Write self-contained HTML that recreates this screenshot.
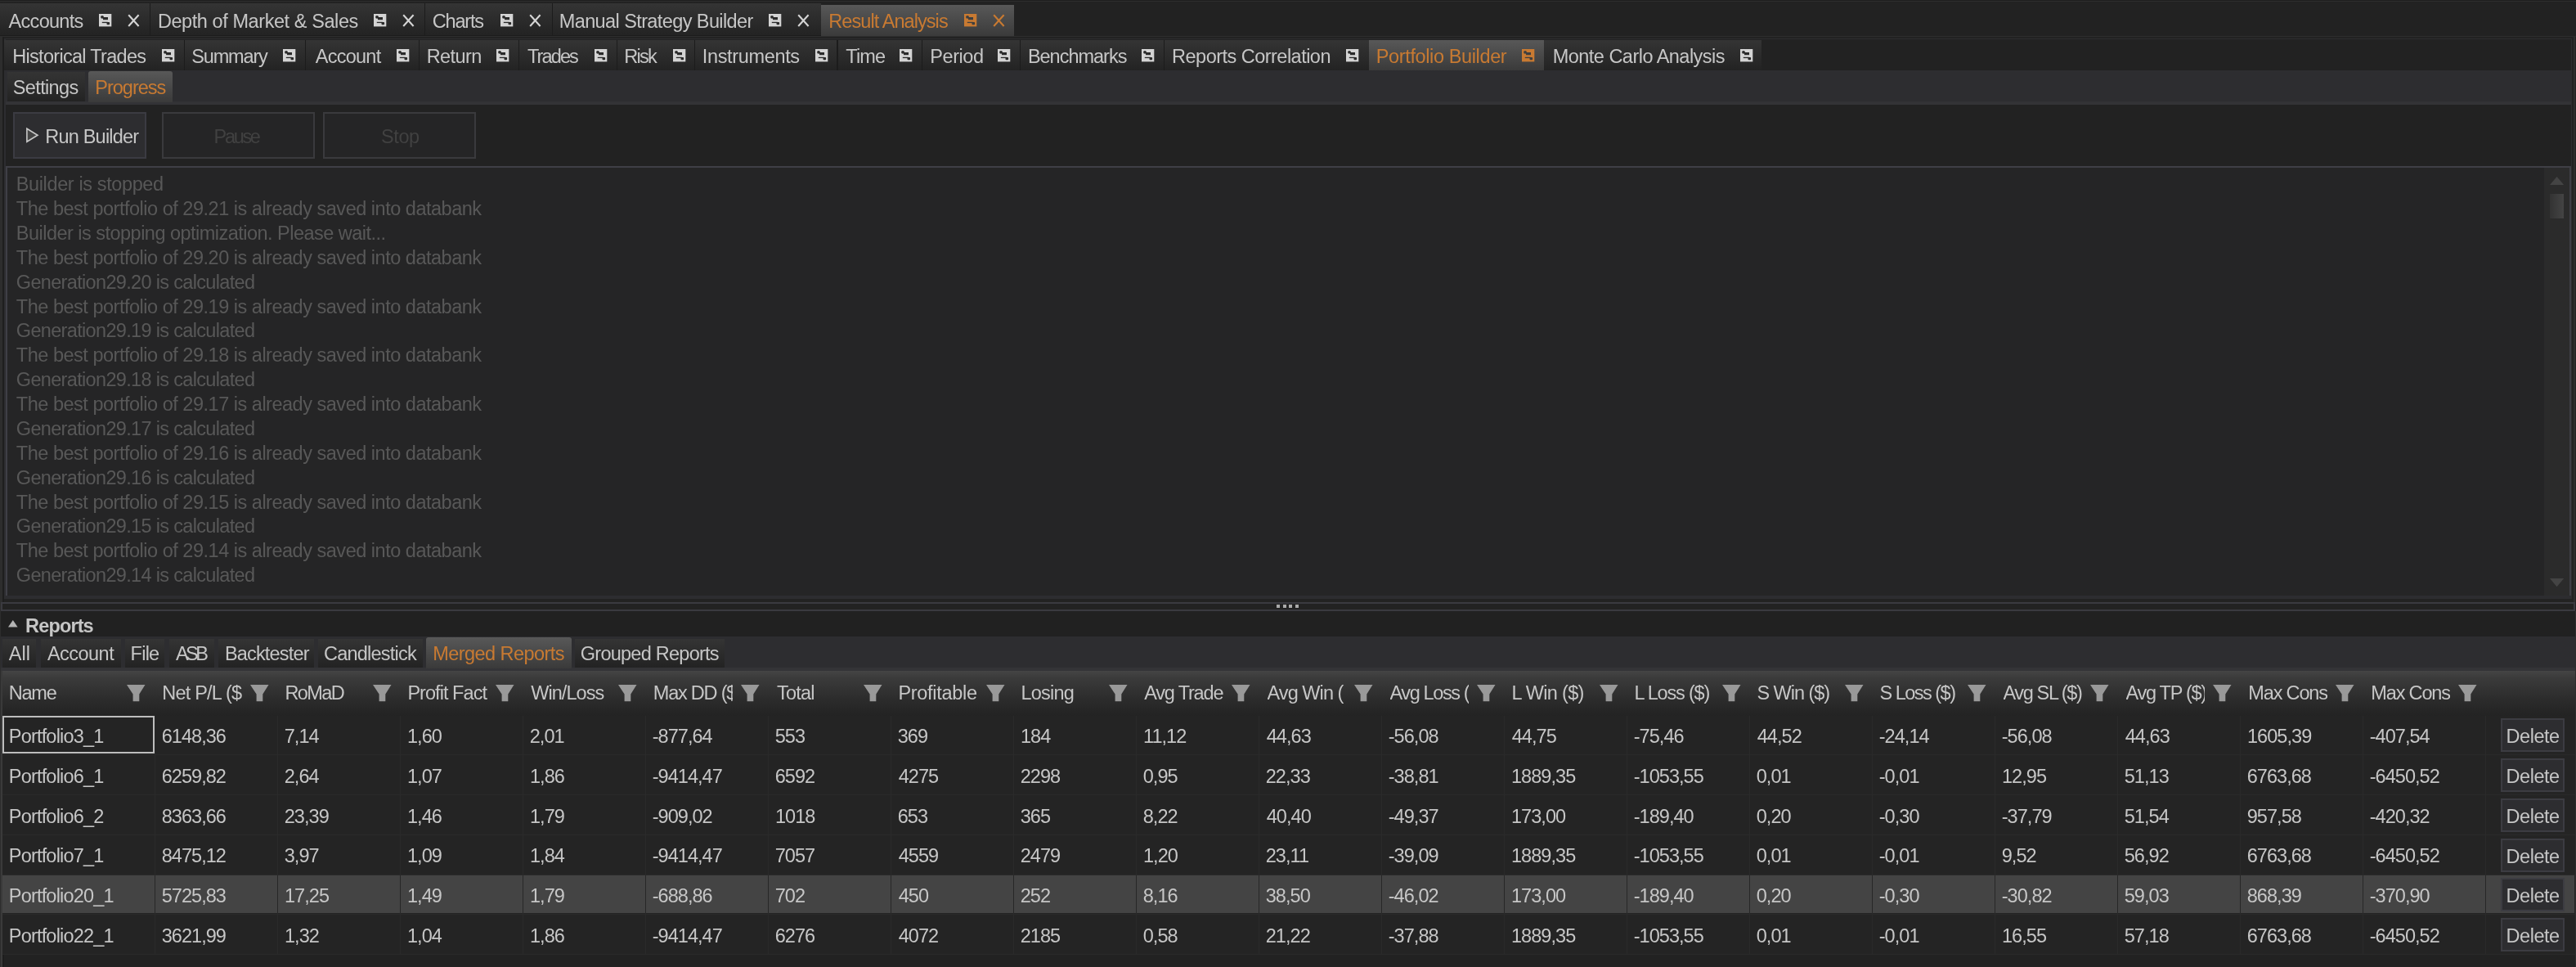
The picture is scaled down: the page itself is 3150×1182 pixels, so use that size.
<!DOCTYPE html>
<html><head><meta charset="utf-8"><title>Result Analysis - Portfolio Builder</title>
<style>
html,body{margin:0;padding:0;}
body{width:3150px;height:1182px;background:#222222;position:relative;overflow:hidden;font-family:"Liberation Sans", sans-serif;}
#app{position:absolute;left:0;top:0;width:3150px;height:1182px;overflow:hidden;will-change:transform;}
#app div,#app span,#app svg{position:absolute;}
#app span{white-space:pre;display:block;}
</style></head><body><div id="app">
<div style="left:0px;top:0px;width:3150px;height:1px;background:#1e1e1e;"></div>
<div style="left:0px;top:1px;width:3150px;height:1px;background:#2d2d2d;"></div>
<div style="left:0px;top:4px;width:1004px;height:40px;background:#1c1c1c;"></div>
<div style="left:0px;top:4px;width:183px;height:39px;background:linear-gradient(#343434,#232323);"></div>
<div style="left:184px;top:4px;width:335px;height:39px;background:linear-gradient(#343434,#232323);"></div>
<div style="left:520px;top:4px;width:154.5px;height:39px;background:linear-gradient(#343434,#232323);"></div>
<div style="left:675.5px;top:4px;width:328.5px;height:39px;background:linear-gradient(#343434,#232323);"></div>
<div style="left:1004.4px;top:6px;width:236.1px;height:39px;background:linear-gradient(#585858,#3a3a3a);"></div>
<svg style="left:121px;top:17px" width="16" height="16" viewBox="0 0 16 16"><rect x="0" y="0" width="15.3" height="15.4" fill="#d4d4d4"/><circle cx="4" cy="3.8" r="1.9" fill="#2a2a2a"/><rect x="5" y="4" width="6" height="3.2" fill="#2a2a2a"/><rect x="3.8" y="9.8" width="7" height="1.3" fill="#2a2a2a"/><rect x="9.5" y="10" width="3.6" height="3.3" rx="1" fill="#2a2a2a"/></svg>
<svg style="left:155.9px;top:17px" width="16" height="17" viewBox="0 0 16 17"><path d="M1.2 1.2 L13.6 15 M13.6 1.2 L1.2 15" stroke="#d4d4d4" stroke-width="2.1" fill="none"/></svg>
<svg style="left:456.7px;top:17px" width="16" height="16" viewBox="0 0 16 16"><rect x="0" y="0" width="15.3" height="15.4" fill="#d4d4d4"/><circle cx="4" cy="3.8" r="1.9" fill="#2a2a2a"/><rect x="5" y="4" width="6" height="3.2" fill="#2a2a2a"/><rect x="3.8" y="9.8" width="7" height="1.3" fill="#2a2a2a"/><rect x="9.5" y="10" width="3.6" height="3.3" rx="1" fill="#2a2a2a"/></svg>
<svg style="left:491.5px;top:17px" width="16" height="17" viewBox="0 0 16 17"><path d="M1.2 1.2 L13.6 15 M13.6 1.2 L1.2 15" stroke="#d4d4d4" stroke-width="2.1" fill="none"/></svg>
<svg style="left:612.3px;top:17px" width="16" height="16" viewBox="0 0 16 16"><rect x="0" y="0" width="15.3" height="15.4" fill="#d4d4d4"/><circle cx="4" cy="3.8" r="1.9" fill="#2a2a2a"/><rect x="5" y="4" width="6" height="3.2" fill="#2a2a2a"/><rect x="3.8" y="9.8" width="7" height="1.3" fill="#2a2a2a"/><rect x="9.5" y="10" width="3.6" height="3.3" rx="1" fill="#2a2a2a"/></svg>
<svg style="left:647.0px;top:17px" width="16" height="17" viewBox="0 0 16 17"><path d="M1.2 1.2 L13.6 15 M13.6 1.2 L1.2 15" stroke="#d4d4d4" stroke-width="2.1" fill="none"/></svg>
<svg style="left:940px;top:17px" width="16" height="16" viewBox="0 0 16 16"><rect x="0" y="0" width="15.3" height="15.4" fill="#d4d4d4"/><circle cx="4" cy="3.8" r="1.9" fill="#2a2a2a"/><rect x="5" y="4" width="6" height="3.2" fill="#2a2a2a"/><rect x="3.8" y="9.8" width="7" height="1.3" fill="#2a2a2a"/><rect x="9.5" y="10" width="3.6" height="3.3" rx="1" fill="#2a2a2a"/></svg>
<svg style="left:975.1px;top:17px" width="16" height="17" viewBox="0 0 16 17"><path d="M1.2 1.2 L13.6 15 M13.6 1.2 L1.2 15" stroke="#d4d4d4" stroke-width="2.1" fill="none"/></svg>
<svg style="left:1178.7px;top:17px" width="16" height="16" viewBox="0 0 16 16"><rect x="0" y="0" width="15.3" height="15.4" fill="#c87a32"/><circle cx="4" cy="3.8" r="1.9" fill="#3f3f3f"/><rect x="5" y="4" width="6" height="3.2" fill="#3f3f3f"/><rect x="3.8" y="9.8" width="7" height="1.3" fill="#3f3f3f"/><rect x="9.5" y="10" width="3.6" height="3.3" rx="1" fill="#3f3f3f"/></svg>
<svg style="left:1213.5px;top:17px" width="16" height="17" viewBox="0 0 16 17"><path d="M1.2 1.2 L13.6 15 M13.6 1.2 L1.2 15" stroke="#c87a32" stroke-width="2.1" fill="none"/></svg>
<div style="left:0px;top:44px;width:3150px;height:1px;background:#2d2d2d;"></div>
<div style="left:0px;top:44px;width:2.5px;height:1138px;background:#2d2d2d;"></div>
<div style="left:3147px;top:44px;width:2px;height:703px;background:#2d2d2d;"></div>
<div style="left:3148.7px;top:747px;width:1.3px;height:435px;background:#2d2d2d;"></div>
<div style="left:2.5px;top:45px;width:2.5px;height:1137px;background:#1e1e1e;"></div>
<div style="left:5px;top:47px;width:3140px;height:1px;background:#2d2d30;"></div>
<div style="left:3144px;top:47px;width:1px;height:684px;background:#2d2d30;"></div>
<div style="left:5px;top:47px;width:1.5px;height:684px;background:#2d2d30;"></div>
<div style="left:5px;top:48.5px;width:2149px;height:37.5px;background:#1c1c1c;"></div>
<div style="left:5px;top:49px;width:220px;height:37px;background:linear-gradient(#343434,#232323);"></div>
<div style="left:226px;top:49px;width:146.8px;height:37px;background:linear-gradient(#343434,#232323);"></div>
<div style="left:373.8px;top:49px;width:138.2px;height:37px;background:linear-gradient(#343434,#232323);"></div>
<div style="left:513px;top:49px;width:120.5px;height:37px;background:linear-gradient(#343434,#232323);"></div>
<div style="left:634.5px;top:49px;width:119.5px;height:37px;background:linear-gradient(#343434,#232323);"></div>
<div style="left:755px;top:49px;width:94.39999999999998px;height:37px;background:linear-gradient(#343434,#232323);"></div>
<div style="left:850.4px;top:49px;width:173.10000000000002px;height:37px;background:linear-gradient(#343434,#232323);"></div>
<div style="left:1024.5px;top:49px;width:102.5px;height:37px;background:linear-gradient(#343434,#232323);"></div>
<div style="left:1128px;top:49px;width:118.79999999999995px;height:37px;background:linear-gradient(#343434,#232323);"></div>
<div style="left:1247.8px;top:49px;width:175.20000000000005px;height:37px;background:linear-gradient(#343434,#232323);"></div>
<div style="left:1424px;top:49px;width:249.5999999999999px;height:37px;background:linear-gradient(#343434,#232323);"></div>
<div style="left:1887.6px;top:49px;width:266.4000000000001px;height:37px;background:linear-gradient(#343434,#232323);"></div>
<div style="left:1673.6px;top:48.5px;width:214px;height:37.5px;background:linear-gradient(#585858,#3a3a3a);"></div>
<svg style="left:197.7px;top:59.9px" width="16" height="16" viewBox="0 0 16 16"><rect x="0" y="0" width="15.3" height="15.4" fill="#d4d4d4"/><circle cx="4" cy="3.8" r="1.9" fill="#2a2a2a"/><rect x="5" y="4" width="6" height="3.2" fill="#2a2a2a"/><rect x="3.8" y="9.8" width="7" height="1.3" fill="#2a2a2a"/><rect x="9.5" y="10" width="3.6" height="3.3" rx="1" fill="#2a2a2a"/></svg>
<svg style="left:346px;top:59.9px" width="16" height="16" viewBox="0 0 16 16"><rect x="0" y="0" width="15.3" height="15.4" fill="#d4d4d4"/><circle cx="4" cy="3.8" r="1.9" fill="#2a2a2a"/><rect x="5" y="4" width="6" height="3.2" fill="#2a2a2a"/><rect x="3.8" y="9.8" width="7" height="1.3" fill="#2a2a2a"/><rect x="9.5" y="10" width="3.6" height="3.3" rx="1" fill="#2a2a2a"/></svg>
<svg style="left:484.7px;top:59.9px" width="16" height="16" viewBox="0 0 16 16"><rect x="0" y="0" width="15.3" height="15.4" fill="#d4d4d4"/><circle cx="4" cy="3.8" r="1.9" fill="#2a2a2a"/><rect x="5" y="4" width="6" height="3.2" fill="#2a2a2a"/><rect x="3.8" y="9.8" width="7" height="1.3" fill="#2a2a2a"/><rect x="9.5" y="10" width="3.6" height="3.3" rx="1" fill="#2a2a2a"/></svg>
<svg style="left:607px;top:59.9px" width="16" height="16" viewBox="0 0 16 16"><rect x="0" y="0" width="15.3" height="15.4" fill="#d4d4d4"/><circle cx="4" cy="3.8" r="1.9" fill="#2a2a2a"/><rect x="5" y="4" width="6" height="3.2" fill="#2a2a2a"/><rect x="3.8" y="9.8" width="7" height="1.3" fill="#2a2a2a"/><rect x="9.5" y="10" width="3.6" height="3.3" rx="1" fill="#2a2a2a"/></svg>
<svg style="left:726.8px;top:59.9px" width="16" height="16" viewBox="0 0 16 16"><rect x="0" y="0" width="15.3" height="15.4" fill="#d4d4d4"/><circle cx="4" cy="3.8" r="1.9" fill="#2a2a2a"/><rect x="5" y="4" width="6" height="3.2" fill="#2a2a2a"/><rect x="3.8" y="9.8" width="7" height="1.3" fill="#2a2a2a"/><rect x="9.5" y="10" width="3.6" height="3.3" rx="1" fill="#2a2a2a"/></svg>
<svg style="left:822.5px;top:59.9px" width="16" height="16" viewBox="0 0 16 16"><rect x="0" y="0" width="15.3" height="15.4" fill="#d4d4d4"/><circle cx="4" cy="3.8" r="1.9" fill="#2a2a2a"/><rect x="5" y="4" width="6" height="3.2" fill="#2a2a2a"/><rect x="3.8" y="9.8" width="7" height="1.3" fill="#2a2a2a"/><rect x="9.5" y="10" width="3.6" height="3.3" rx="1" fill="#2a2a2a"/></svg>
<svg style="left:997px;top:59.9px" width="16" height="16" viewBox="0 0 16 16"><rect x="0" y="0" width="15.3" height="15.4" fill="#d4d4d4"/><circle cx="4" cy="3.8" r="1.9" fill="#2a2a2a"/><rect x="5" y="4" width="6" height="3.2" fill="#2a2a2a"/><rect x="3.8" y="9.8" width="7" height="1.3" fill="#2a2a2a"/><rect x="9.5" y="10" width="3.6" height="3.3" rx="1" fill="#2a2a2a"/></svg>
<svg style="left:1100px;top:59.9px" width="16" height="16" viewBox="0 0 16 16"><rect x="0" y="0" width="15.3" height="15.4" fill="#d4d4d4"/><circle cx="4" cy="3.8" r="1.9" fill="#2a2a2a"/><rect x="5" y="4" width="6" height="3.2" fill="#2a2a2a"/><rect x="3.8" y="9.8" width="7" height="1.3" fill="#2a2a2a"/><rect x="9.5" y="10" width="3.6" height="3.3" rx="1" fill="#2a2a2a"/></svg>
<svg style="left:1219.6px;top:59.9px" width="16" height="16" viewBox="0 0 16 16"><rect x="0" y="0" width="15.3" height="15.4" fill="#d4d4d4"/><circle cx="4" cy="3.8" r="1.9" fill="#2a2a2a"/><rect x="5" y="4" width="6" height="3.2" fill="#2a2a2a"/><rect x="3.8" y="9.8" width="7" height="1.3" fill="#2a2a2a"/><rect x="9.5" y="10" width="3.6" height="3.3" rx="1" fill="#2a2a2a"/></svg>
<svg style="left:1396.3px;top:59.9px" width="16" height="16" viewBox="0 0 16 16"><rect x="0" y="0" width="15.3" height="15.4" fill="#d4d4d4"/><circle cx="4" cy="3.8" r="1.9" fill="#2a2a2a"/><rect x="5" y="4" width="6" height="3.2" fill="#2a2a2a"/><rect x="3.8" y="9.8" width="7" height="1.3" fill="#2a2a2a"/><rect x="9.5" y="10" width="3.6" height="3.3" rx="1" fill="#2a2a2a"/></svg>
<svg style="left:1645.8px;top:59.9px" width="16" height="16" viewBox="0 0 16 16"><rect x="0" y="0" width="15.3" height="15.4" fill="#d4d4d4"/><circle cx="4" cy="3.8" r="1.9" fill="#2a2a2a"/><rect x="5" y="4" width="6" height="3.2" fill="#2a2a2a"/><rect x="3.8" y="9.8" width="7" height="1.3" fill="#2a2a2a"/><rect x="9.5" y="10" width="3.6" height="3.3" rx="1" fill="#2a2a2a"/></svg>
<svg style="left:2127.6px;top:59.9px" width="16" height="16" viewBox="0 0 16 16"><rect x="0" y="0" width="15.3" height="15.4" fill="#d4d4d4"/><circle cx="4" cy="3.8" r="1.9" fill="#2a2a2a"/><rect x="5" y="4" width="6" height="3.2" fill="#2a2a2a"/><rect x="3.8" y="9.8" width="7" height="1.3" fill="#2a2a2a"/><rect x="9.5" y="10" width="3.6" height="3.3" rx="1" fill="#2a2a2a"/></svg>
<svg style="left:1861.4px;top:59.9px" width="16" height="16" viewBox="0 0 16 16"><rect x="0" y="0" width="15.3" height="15.4" fill="#c87a32"/><circle cx="4" cy="3.8" r="1.9" fill="#3f3f3f"/><rect x="5" y="4" width="6" height="3.2" fill="#3f3f3f"/><rect x="3.8" y="9.8" width="7" height="1.3" fill="#3f3f3f"/><rect x="9.5" y="10" width="3.6" height="3.3" rx="1" fill="#3f3f3f"/></svg>
<div style="left:6.5px;top:86px;width:3137.5px;height:42px;background:#2d2d30;"></div>
<div style="left:6.5px;top:124px;width:3137.5px;height:4px;background:#333336;"></div>
<div style="left:9px;top:88px;width:95px;height:36px;background:linear-gradient(#343434,#232323);"></div>
<div style="left:108px;top:87px;width:103px;height:38px;background:linear-gradient(#585858,#3a3a3a);border-radius:3px 3px 0 0;"></div>
<div style="left:16.1px;top:137.2px;width:163px;height:56.5px;background:#2d2d30;box-sizing:border-box;border:2px solid #3b3b42;"></div>
<div style="left:198px;top:137.2px;width:187px;height:56.5px;background:#252526;box-sizing:border-box;border:2px solid #3a3a3d;"></div>
<div style="left:395px;top:137.2px;width:187px;height:56.5px;background:#252526;box-sizing:border-box;border:2px solid #3a3a3d;"></div>
<svg style="left:31px;top:154px" width="20" height="23" viewBox="0 0 20 23"><path d="M1.9 3.3 L15 11.3 L1.9 19.3 Z" fill="#444" stroke="#c8c8c8" stroke-width="1.6" stroke-linejoin="miter"/></svg>
<div style="left:6.5px;top:203px;width:3137.5px;height:527px;background:#252526;box-sizing:border-box;border:2px solid #3f3f46;"></div>
<div style="left:5px;top:728px;width:3140px;height:4px;background:#2d2d30;"></div>
<div style="left:3110.5px;top:205px;width:31.5px;height:523px;background:#2b2b2b;"></div>
<svg style="left:3117.7px;top:215.8px" width="18" height="10" viewBox="0 0 18 10"><path d="M0 10 L8.6 0 L17.2 10 Z" fill="#444"/></svg>
<svg style="left:3117.7px;top:707px" width="18" height="11" viewBox="0 0 18 11"><path d="M0 0 L17.2 0 L8.6 10.3 Z" fill="#444"/></svg>
<div style="left:3117.7px;top:236.5px;width:17.2px;height:30.2px;background:linear-gradient(90deg,#333,#444);"></div>
<div style="left:1.2px;top:735.6px;width:3147.6px;height:11.5px;background:#222;box-sizing:border-box;border:2px solid #3a3a40;"></div>
<div style="left:1561px;top:739.3px;width:4.2px;height:4.2px;background:#aaaaaa;"></div>
<div style="left:1568.5px;top:739.3px;width:4.2px;height:4.2px;background:#aaaaaa;"></div>
<div style="left:1576px;top:739.3px;width:4.2px;height:4.2px;background:#aaaaaa;"></div>
<div style="left:1583.5px;top:739.3px;width:4.2px;height:4.2px;background:#aaaaaa;"></div>
<div style="left:0px;top:747px;width:1.2px;height:435px;background:#2d2d2d;"></div>
<div style="left:1.2px;top:820px;width:1.5px;height:362px;background:#3a3a3a;"></div>
<div style="left:1.2px;top:747px;width:3147.5px;height:31px;background:#212121;"></div>
<svg style="left:10.3px;top:757.7px" width="12" height="9" viewBox="0 0 12 9"><path d="M0 8.4 L5.8 0 L11.6 8.4 Z" fill="#b4b4b4"/></svg>
<div style="left:1.2px;top:778px;width:3147.5px;height:42px;background:#2d2d30;"></div>
<div style="left:1.2px;top:816px;width:3147.5px;height:4px;background:#343437;"></div>
<div style="left:3px;top:780.5px;width:41px;height:35.5px;background:linear-gradient(#343434,#232323);"></div>
<div style="left:49.6px;top:780.5px;width:98.0px;height:35.5px;background:linear-gradient(#343434,#232323);"></div>
<div style="left:152.6px;top:780.5px;width:48.900000000000006px;height:35.5px;background:linear-gradient(#343434,#232323);"></div>
<div style="left:207px;top:780.5px;width:54.80000000000001px;height:35.5px;background:linear-gradient(#343434,#232323);"></div>
<div style="left:267px;top:780.5px;width:117px;height:35.5px;background:linear-gradient(#343434,#232323);"></div>
<div style="left:389px;top:780.5px;width:127.60000000000002px;height:35.5px;background:linear-gradient(#343434,#232323);"></div>
<div style="left:702.7px;top:780.5px;width:183.0px;height:35.5px;background:linear-gradient(#343434,#232323);"></div>
<div style="left:520.7px;top:779px;width:178.3px;height:38px;background:linear-gradient(#585858,#3a3a3a);border-radius:3px 3px 0 0;"></div>
<div style="left:2.7px;top:820px;width:3146px;height:54.5px;background:linear-gradient(#454545 0%,#3b3b3b 15%,#2c2c2c 62%,#232323 100%);"></div>
<svg style="left:154.7px;top:836.6px" width="24" height="22" viewBox="0 0 24 22"><path d="M0 0 H22.5 L15.3 11.4 V20.3 H7.6 V11.4 Z" fill="#999999"/></svg>
<svg style="left:305.5px;top:836.6px" width="24" height="22" viewBox="0 0 24 22"><path d="M0 0 H22.5 L15.3 11.4 V20.3 H7.6 V11.4 Z" fill="#999999"/></svg>
<svg style="left:455.5px;top:836.6px" width="24" height="22" viewBox="0 0 24 22"><path d="M0 0 H22.5 L15.3 11.4 V20.3 H7.6 V11.4 Z" fill="#999999"/></svg>
<svg style="left:605.5px;top:836.6px" width="24" height="22" viewBox="0 0 24 22"><path d="M0 0 H22.5 L15.3 11.4 V20.3 H7.6 V11.4 Z" fill="#999999"/></svg>
<svg style="left:755.5px;top:836.6px" width="24" height="22" viewBox="0 0 24 22"><path d="M0 0 H22.5 L15.3 11.4 V20.3 H7.6 V11.4 Z" fill="#999999"/></svg>
<svg style="left:905.5px;top:836.6px" width="24" height="22" viewBox="0 0 24 22"><path d="M0 0 H22.5 L15.3 11.4 V20.3 H7.6 V11.4 Z" fill="#999999"/></svg>
<svg style="left:1055.5px;top:836.6px" width="24" height="22" viewBox="0 0 24 22"><path d="M0 0 H22.5 L15.3 11.4 V20.3 H7.6 V11.4 Z" fill="#999999"/></svg>
<svg style="left:1205.5px;top:836.6px" width="24" height="22" viewBox="0 0 24 22"><path d="M0 0 H22.5 L15.3 11.4 V20.3 H7.6 V11.4 Z" fill="#999999"/></svg>
<svg style="left:1355.5px;top:836.6px" width="24" height="22" viewBox="0 0 24 22"><path d="M0 0 H22.5 L15.3 11.4 V20.3 H7.6 V11.4 Z" fill="#999999"/></svg>
<svg style="left:1505.5px;top:836.6px" width="24" height="22" viewBox="0 0 24 22"><path d="M0 0 H22.5 L15.3 11.4 V20.3 H7.6 V11.4 Z" fill="#999999"/></svg>
<svg style="left:1655.5px;top:836.6px" width="24" height="22" viewBox="0 0 24 22"><path d="M0 0 H22.5 L15.3 11.4 V20.3 H7.6 V11.4 Z" fill="#999999"/></svg>
<svg style="left:1805.5px;top:836.6px" width="24" height="22" viewBox="0 0 24 22"><path d="M0 0 H22.5 L15.3 11.4 V20.3 H7.6 V11.4 Z" fill="#999999"/></svg>
<svg style="left:1955.5px;top:836.6px" width="24" height="22" viewBox="0 0 24 22"><path d="M0 0 H22.5 L15.3 11.4 V20.3 H7.6 V11.4 Z" fill="#999999"/></svg>
<svg style="left:2105.5px;top:836.6px" width="24" height="22" viewBox="0 0 24 22"><path d="M0 0 H22.5 L15.3 11.4 V20.3 H7.6 V11.4 Z" fill="#999999"/></svg>
<svg style="left:2255.5px;top:836.6px" width="24" height="22" viewBox="0 0 24 22"><path d="M0 0 H22.5 L15.3 11.4 V20.3 H7.6 V11.4 Z" fill="#999999"/></svg>
<svg style="left:2405.5px;top:836.6px" width="24" height="22" viewBox="0 0 24 22"><path d="M0 0 H22.5 L15.3 11.4 V20.3 H7.6 V11.4 Z" fill="#999999"/></svg>
<svg style="left:2555.5px;top:836.6px" width="24" height="22" viewBox="0 0 24 22"><path d="M0 0 H22.5 L15.3 11.4 V20.3 H7.6 V11.4 Z" fill="#999999"/></svg>
<svg style="left:2705.5px;top:836.6px" width="24" height="22" viewBox="0 0 24 22"><path d="M0 0 H22.5 L15.3 11.4 V20.3 H7.6 V11.4 Z" fill="#999999"/></svg>
<svg style="left:2855.5px;top:836.6px" width="24" height="22" viewBox="0 0 24 22"><path d="M0 0 H22.5 L15.3 11.4 V20.3 H7.6 V11.4 Z" fill="#999999"/></svg>
<svg style="left:3005.5px;top:836.6px" width="24" height="22" viewBox="0 0 24 22"><path d="M0 0 H22.5 L15.3 11.4 V20.3 H7.6 V11.4 Z" fill="#999999"/></svg>
<div style="left:2.7px;top:874.5px;width:3146px;height:292px;background:#242424;"></div>
<div style="left:2.7px;top:922px;width:3146px;height:1px;background:#2a2a2a;"></div>
<div style="left:2.7px;top:971px;width:3146px;height:1px;background:#2a2a2a;"></div>
<div style="left:2.7px;top:1020px;width:3146px;height:1px;background:#2a2a2a;"></div>
<div style="left:2.7px;top:1069px;width:3146px;height:1px;background:#2a2a2a;"></div>
<div style="left:2.7px;top:1069.5px;width:3145.3px;height:46.7px;background:#444444;"></div>
<div style="left:2.7px;top:1117px;width:3146px;height:1px;background:#2a2a2a;"></div>
<div style="left:2.7px;top:1166px;width:3146px;height:1px;background:#2a2a2a;"></div>
<div style="left:188.5px;top:874.5px;width:1px;height:292px;background:#2a2a2a;"></div>
<div style="left:188.5px;top:1069.5px;width:1.5px;height:46.7px;background:#272727;"></div>
<div style="left:338.5px;top:874.5px;width:1px;height:292px;background:#2a2a2a;"></div>
<div style="left:338.5px;top:1069.5px;width:1.5px;height:46.7px;background:#272727;"></div>
<div style="left:488.5px;top:874.5px;width:1px;height:292px;background:#2a2a2a;"></div>
<div style="left:488.5px;top:1069.5px;width:1.5px;height:46.7px;background:#272727;"></div>
<div style="left:638.5px;top:874.5px;width:1px;height:292px;background:#2a2a2a;"></div>
<div style="left:638.5px;top:1069.5px;width:1.5px;height:46.7px;background:#272727;"></div>
<div style="left:788.5px;top:874.5px;width:1px;height:292px;background:#2a2a2a;"></div>
<div style="left:788.5px;top:1069.5px;width:1.5px;height:46.7px;background:#272727;"></div>
<div style="left:938.5px;top:874.5px;width:1px;height:292px;background:#2a2a2a;"></div>
<div style="left:938.5px;top:1069.5px;width:1.5px;height:46.7px;background:#272727;"></div>
<div style="left:1088.5px;top:874.5px;width:1px;height:292px;background:#2a2a2a;"></div>
<div style="left:1088.5px;top:1069.5px;width:1.5px;height:46.7px;background:#272727;"></div>
<div style="left:1238.5px;top:874.5px;width:1px;height:292px;background:#2a2a2a;"></div>
<div style="left:1238.5px;top:1069.5px;width:1.5px;height:46.7px;background:#272727;"></div>
<div style="left:1388.5px;top:874.5px;width:1px;height:292px;background:#2a2a2a;"></div>
<div style="left:1388.5px;top:1069.5px;width:1.5px;height:46.7px;background:#272727;"></div>
<div style="left:1538.5px;top:874.5px;width:1px;height:292px;background:#2a2a2a;"></div>
<div style="left:1538.5px;top:1069.5px;width:1.5px;height:46.7px;background:#272727;"></div>
<div style="left:1688.5px;top:874.5px;width:1px;height:292px;background:#2a2a2a;"></div>
<div style="left:1688.5px;top:1069.5px;width:1.5px;height:46.7px;background:#272727;"></div>
<div style="left:1838.5px;top:874.5px;width:1px;height:292px;background:#2a2a2a;"></div>
<div style="left:1838.5px;top:1069.5px;width:1.5px;height:46.7px;background:#272727;"></div>
<div style="left:1988.5px;top:874.5px;width:1px;height:292px;background:#2a2a2a;"></div>
<div style="left:1988.5px;top:1069.5px;width:1.5px;height:46.7px;background:#272727;"></div>
<div style="left:2138.5px;top:874.5px;width:1px;height:292px;background:#2a2a2a;"></div>
<div style="left:2138.5px;top:1069.5px;width:1.5px;height:46.7px;background:#272727;"></div>
<div style="left:2288.5px;top:874.5px;width:1px;height:292px;background:#2a2a2a;"></div>
<div style="left:2288.5px;top:1069.5px;width:1.5px;height:46.7px;background:#272727;"></div>
<div style="left:2438.5px;top:874.5px;width:1px;height:292px;background:#2a2a2a;"></div>
<div style="left:2438.5px;top:1069.5px;width:1.5px;height:46.7px;background:#272727;"></div>
<div style="left:2588.5px;top:874.5px;width:1px;height:292px;background:#2a2a2a;"></div>
<div style="left:2588.5px;top:1069.5px;width:1.5px;height:46.7px;background:#272727;"></div>
<div style="left:2738.5px;top:874.5px;width:1px;height:292px;background:#2a2a2a;"></div>
<div style="left:2738.5px;top:1069.5px;width:1.5px;height:46.7px;background:#272727;"></div>
<div style="left:2888.5px;top:874.5px;width:1px;height:292px;background:#2a2a2a;"></div>
<div style="left:2888.5px;top:1069.5px;width:1.5px;height:46.7px;background:#272727;"></div>
<div style="left:3038.5px;top:874.5px;width:1px;height:292px;background:#2a2a2a;"></div>
<div style="left:3038.5px;top:1069.5px;width:1.5px;height:46.7px;background:#272727;"></div>
<div style="left:3px;top:874.5px;width:186px;height:46.5px;background:transparent;box-sizing:border-box;border:2px solid #bdbdbd;"></div>
<div style="left:3057.8px;top:878px;width:78.6px;height:41px;background:#2d2d30;box-sizing:border-box;border:2px solid #3c3c42;"></div>
<div style="left:3057.8px;top:927px;width:78.6px;height:41px;background:#2d2d30;box-sizing:border-box;border:2px solid #3c3c42;"></div>
<div style="left:3057.8px;top:976px;width:78.6px;height:41px;background:#2d2d30;box-sizing:border-box;border:2px solid #3c3c42;"></div>
<div style="left:3057.8px;top:1025px;width:78.6px;height:41px;background:#2d2d30;box-sizing:border-box;border:2px solid #3c3c42;"></div>
<div style="left:3057.8px;top:1073px;width:78.6px;height:41px;background:#2d2d30;box-sizing:border-box;border:2px solid #3c3c42;"></div>
<div style="left:3057.8px;top:1122px;width:78.6px;height:41px;background:#2d2d30;box-sizing:border-box;border:2px solid #3c3c42;"></div>
<span style="left:10.60px;top:15px;font-size:23.5px;line-height:23.5px;color:#c6c6c6;letter-spacing:-0.714px;">Accounts</span>
<span style="left:192.90px;top:15px;font-size:23.5px;line-height:23.5px;color:#c6c6c6;letter-spacing:-0.423px;">Depth of Market &amp; Sales</span>
<span style="left:528.80px;top:15px;font-size:23.5px;line-height:23.5px;color:#c6c6c6;letter-spacing:-1.180px;">Charts</span>
<span style="left:683.70px;top:15px;font-size:23.5px;line-height:23.5px;color:#c6c6c6;letter-spacing:-0.595px;">Manual Strategy Builder</span>
<span style="left:1013.30px;top:15px;font-size:23.5px;line-height:23.5px;color:#c87a32;letter-spacing:-0.929px;">Result Analysis</span>
<span style="left:15.30px;top:58px;font-size:23.5px;line-height:23.5px;color:#c6c6c6;letter-spacing:-0.706px;">Historical Trades</span>
<span style="left:234.30px;top:58px;font-size:23.5px;line-height:23.5px;color:#c6c6c6;letter-spacing:-1.167px;">Summary</span>
<span style="left:385.70px;top:58px;font-size:23.5px;line-height:23.5px;color:#c6c6c6;letter-spacing:-0.733px;">Account</span>
<span style="left:521.70px;top:58px;font-size:23.5px;line-height:23.5px;color:#c6c6c6;letter-spacing:-0.580px;">Return</span>
<span style="left:645.00px;top:58px;font-size:23.5px;line-height:23.5px;color:#c6c6c6;letter-spacing:-1.880px;">Trades</span>
<span style="left:763.30px;top:58px;font-size:23.5px;line-height:23.5px;color:#c6c6c6;letter-spacing:-1.733px;">Risk</span>
<span style="left:858.80px;top:58px;font-size:23.5px;line-height:23.5px;color:#c6c6c6;letter-spacing:-0.350px;">Instruments</span>
<span style="left:1034.30px;top:58px;font-size:23.5px;line-height:23.5px;color:#c6c6c6;letter-spacing:-0.867px;">Time</span>
<span style="left:1137.30px;top:58px;font-size:23.5px;line-height:23.5px;color:#c6c6c6;letter-spacing:-0.440px;">Period</span>
<span style="left:1256.90px;top:58px;font-size:23.5px;line-height:23.5px;color:#c6c6c6;letter-spacing:-1.011px;">Benchmarks</span>
<span style="left:1433.10px;top:58px;font-size:23.5px;line-height:23.5px;color:#c6c6c6;letter-spacing:-0.522px;">Reports Correlation</span>
<span style="left:1898.70px;top:58px;font-size:23.5px;line-height:23.5px;color:#c6c6c6;letter-spacing:-0.521px;">Monte Carlo Analysis</span>
<span style="left:1682.80px;top:58px;font-size:23.5px;line-height:23.5px;color:#c87a32;letter-spacing:-0.375px;">Portfolio Builder</span>
<span style="left:15.80px;top:96px;font-size:23.5px;line-height:23.5px;color:#c6c6c6;letter-spacing:-0.643px;">Settings</span>
<span style="left:116.30px;top:96px;font-size:23.5px;line-height:23.5px;color:#c87a32;letter-spacing:-1.000px;">Progress</span>
<span style="left:55.30px;top:156px;font-size:23.5px;line-height:23.5px;color:#c6c6c6;letter-spacing:-0.800px;">Run Builder</span>
<span style="left:261.60px;top:156px;font-size:23.5px;line-height:23.5px;color:#414141;letter-spacing:-2.325px;">Pause</span>
<span style="left:466.00px;top:156px;font-size:23.5px;line-height:23.5px;color:#414141;letter-spacing:-0.400px;">Stop</span>
<span style="left:19.80px;top:214px;font-size:23.5px;line-height:23.5px;color:#585858;letter-spacing:-0.382px;">Builder is stopped</span>
<span style="left:19.80px;top:244px;font-size:23.5px;line-height:23.5px;color:#585858;letter-spacing:-0.486px;">The best portfolio of 29.21 is already saved into databank</span>
<span style="left:19.80px;top:274px;font-size:23.5px;line-height:23.5px;color:#585858;letter-spacing:-0.521px;">Builder is stopping optimization. Please wait...</span>
<span style="left:19.80px;top:304px;font-size:23.5px;line-height:23.5px;color:#585858;letter-spacing:-0.486px;">The best portfolio of 29.20 is already saved into databank</span>
<span style="left:19.80px;top:334px;font-size:23.5px;line-height:23.5px;color:#585858;letter-spacing:-0.668px;">Generation29.20 is calculated</span>
<span style="left:19.80px;top:364px;font-size:23.5px;line-height:23.5px;color:#585858;letter-spacing:-0.486px;">The best portfolio of 29.19 is already saved into databank</span>
<span style="left:19.80px;top:393px;font-size:23.5px;line-height:23.5px;color:#585858;letter-spacing:-0.668px;">Generation29.19 is calculated</span>
<span style="left:19.80px;top:423px;font-size:23.5px;line-height:23.5px;color:#585858;letter-spacing:-0.486px;">The best portfolio of 29.18 is already saved into databank</span>
<span style="left:19.80px;top:453px;font-size:23.5px;line-height:23.5px;color:#585858;letter-spacing:-0.668px;">Generation29.18 is calculated</span>
<span style="left:19.80px;top:483px;font-size:23.5px;line-height:23.5px;color:#585858;letter-spacing:-0.486px;">The best portfolio of 29.17 is already saved into databank</span>
<span style="left:19.80px;top:513px;font-size:23.5px;line-height:23.5px;color:#585858;letter-spacing:-0.668px;">Generation29.17 is calculated</span>
<span style="left:19.80px;top:543px;font-size:23.5px;line-height:23.5px;color:#585858;letter-spacing:-0.486px;">The best portfolio of 29.16 is already saved into databank</span>
<span style="left:19.80px;top:573px;font-size:23.5px;line-height:23.5px;color:#585858;letter-spacing:-0.668px;">Generation29.16 is calculated</span>
<span style="left:19.80px;top:603px;font-size:23.5px;line-height:23.5px;color:#585858;letter-spacing:-0.486px;">The best portfolio of 29.15 is already saved into databank</span>
<span style="left:19.80px;top:632px;font-size:23.5px;line-height:23.5px;color:#585858;letter-spacing:-0.668px;">Generation29.15 is calculated</span>
<span style="left:19.80px;top:662px;font-size:23.5px;line-height:23.5px;color:#585858;letter-spacing:-0.486px;">The best portfolio of 29.14 is already saved into databank</span>
<span style="left:19.80px;top:692px;font-size:23.5px;line-height:23.5px;color:#585858;letter-spacing:-0.668px;">Generation29.14 is calculated</span>
<span style="left:31.10px;top:754px;font-size:23.5px;line-height:23.5px;color:#c6c6c6;letter-spacing:-0.867px;font-weight:700;">Reports</span>
<span style="left:10.70px;top:788px;font-size:23.5px;line-height:23.5px;color:#c6c6c6;letter-spacing:0.050px;">All</span>
<span style="left:57.90px;top:788px;font-size:23.5px;line-height:23.5px;color:#c6c6c6;letter-spacing:-0.517px;">Account</span>
<span style="left:159.60px;top:788px;font-size:23.5px;line-height:23.5px;color:#c6c6c6;letter-spacing:-0.767px;">File</span>
<span style="left:214.90px;top:788px;font-size:23.5px;line-height:23.5px;color:#c6c6c6;letter-spacing:-3.550px;">ASB</span>
<span style="left:274.90px;top:788px;font-size:23.5px;line-height:23.5px;color:#c6c6c6;letter-spacing:-0.822px;">Backtester</span>
<span style="left:396.00px;top:788px;font-size:23.5px;line-height:23.5px;color:#c6c6c6;letter-spacing:-0.770px;">Candlestick</span>
<span style="left:709.80px;top:788px;font-size:23.5px;line-height:23.5px;color:#c6c6c6;letter-spacing:-0.750px;">Grouped Reports</span>
<span style="left:529.30px;top:788px;font-size:23.5px;line-height:23.5px;color:#c87a32;letter-spacing:-0.569px;">Merged Reports</span>
<span style="left:10.80px;top:836px;font-size:23.5px;line-height:23.5px;color:#c6c6c6;letter-spacing:-1.233px;width:139.2px;overflow:hidden;">Name</span>
<span style="left:198.30px;top:836px;font-size:23.5px;line-height:23.5px;color:#c6c6c6;letter-spacing:-0.800px;width:97.7px;overflow:hidden;">Net P/L ($</span>
<span style="left:348.40px;top:836px;font-size:23.5px;line-height:23.5px;color:#c6c6c6;letter-spacing:-1.600px;width:97.6px;overflow:hidden;">RoMaD</span>
<span style="left:498.40px;top:836px;font-size:23.5px;line-height:23.5px;color:#c6c6c6;letter-spacing:-0.950px;width:97.6px;overflow:hidden;">Profit Factor</span>
<span style="left:649.20px;top:836px;font-size:23.5px;line-height:23.5px;color:#c6c6c6;letter-spacing:-0.929px;width:96.8px;overflow:hidden;">Win/Loss</span>
<span style="left:798.80px;top:836px;font-size:23.5px;line-height:23.5px;color:#c6c6c6;letter-spacing:-1.214px;width:97.2px;overflow:hidden;">Max DD ($)</span>
<span style="left:949.90px;top:836px;font-size:23.5px;line-height:23.5px;color:#c6c6c6;letter-spacing:-0.750px;width:96.1px;overflow:hidden;">Total</span>
<span style="left:1098.40px;top:836px;font-size:23.5px;line-height:23.5px;color:#c6c6c6;letter-spacing:-0.300px;width:97.6px;overflow:hidden;">Profitable</span>
<span style="left:1248.40px;top:836px;font-size:23.5px;line-height:23.5px;color:#c6c6c6;letter-spacing:-0.760px;width:97.6px;overflow:hidden;">Losing</span>
<span style="left:1399.20px;top:836px;font-size:23.5px;line-height:23.5px;color:#c6c6c6;letter-spacing:-1.175px;width:96.8px;overflow:hidden;">Avg Trade</span>
<span style="left:1549.50px;top:836px;font-size:23.5px;line-height:23.5px;color:#c6c6c6;letter-spacing:-0.937px;width:96.5px;overflow:hidden;">Avg Win (</span>
<span style="left:1699.50px;top:836px;font-size:23.5px;line-height:23.5px;color:#c6c6c6;letter-spacing:-1.386px;width:96.5px;overflow:hidden;">Avg Loss ($)</span>
<span style="left:1848.40px;top:836px;font-size:23.5px;line-height:23.5px;color:#c6c6c6;letter-spacing:-0.688px;width:97.6px;overflow:hidden;">L Win ($)</span>
<span style="left:1998.40px;top:836px;font-size:23.5px;line-height:23.5px;color:#c6c6c6;letter-spacing:-1.200px;width:97.6px;overflow:hidden;">L Loss ($)</span>
<span style="left:2148.50px;top:836px;font-size:23.5px;line-height:23.5px;color:#c6c6c6;letter-spacing:-1.050px;width:97.5px;overflow:hidden;">S Win ($)</span>
<span style="left:2298.50px;top:836px;font-size:23.5px;line-height:23.5px;color:#c6c6c6;letter-spacing:-1.511px;width:97.5px;overflow:hidden;">S Loss ($)</span>
<span style="left:2449.50px;top:836px;font-size:23.5px;line-height:23.5px;color:#c6c6c6;letter-spacing:-1.378px;width:96.5px;overflow:hidden;">Avg SL ($)</span>
<span style="left:2599.50px;top:836px;font-size:23.5px;line-height:23.5px;color:#c6c6c6;letter-spacing:-1.275px;width:96.5px;overflow:hidden;">Avg TP ($)</span>
<span style="left:2749.30px;top:836px;font-size:23.5px;line-height:23.5px;color:#c6c6c6;letter-spacing:-1.157px;width:96.7px;overflow:hidden;">Max Cons</span>
<span style="left:2899.30px;top:836px;font-size:23.5px;line-height:23.5px;color:#c6c6c6;letter-spacing:-1.157px;width:96.7px;overflow:hidden;">Max Cons</span>
<span style="left:10.80px;top:889px;font-size:23.5px;line-height:23.5px;color:#c6c6c6;letter-spacing:-0.810px;">Portfolio3_1</span>
<span style="left:197.70px;top:889px;font-size:23.5px;line-height:23.5px;color:#c6c6c6;letter-spacing:-0.950px;">6148,36</span>
<span style="left:347.70px;top:889px;font-size:23.5px;line-height:23.5px;color:#c6c6c6;letter-spacing:-0.950px;">7,14</span>
<span style="left:498.00px;top:889px;font-size:23.5px;line-height:23.5px;color:#c6c6c6;letter-spacing:-0.950px;">1,60</span>
<span style="left:647.70px;top:889px;font-size:23.5px;line-height:23.5px;color:#c6c6c6;letter-spacing:-0.950px;">2,01</span>
<span style="left:797.70px;top:889px;font-size:23.5px;line-height:23.5px;color:#c6c6c6;letter-spacing:-0.950px;">-877,64</span>
<span style="left:947.70px;top:889px;font-size:23.5px;line-height:23.5px;color:#c6c6c6;letter-spacing:-0.950px;">553</span>
<span style="left:1097.70px;top:889px;font-size:23.5px;line-height:23.5px;color:#c6c6c6;letter-spacing:-0.950px;">369</span>
<span style="left:1248.00px;top:889px;font-size:23.5px;line-height:23.5px;color:#c6c6c6;letter-spacing:-0.950px;">184</span>
<span style="left:1398.00px;top:889px;font-size:23.5px;line-height:23.5px;color:#c6c6c6;letter-spacing:-0.950px;">11,12</span>
<span style="left:1548.70px;top:889px;font-size:23.5px;line-height:23.5px;color:#c6c6c6;letter-spacing:-0.950px;">44,63</span>
<span style="left:1697.70px;top:889px;font-size:23.5px;line-height:23.5px;color:#c6c6c6;letter-spacing:-0.950px;">-56,08</span>
<span style="left:1848.70px;top:889px;font-size:23.5px;line-height:23.5px;color:#c6c6c6;letter-spacing:-0.950px;">44,75</span>
<span style="left:1997.70px;top:889px;font-size:23.5px;line-height:23.5px;color:#c6c6c6;letter-spacing:-0.950px;">-75,46</span>
<span style="left:2148.70px;top:889px;font-size:23.5px;line-height:23.5px;color:#c6c6c6;letter-spacing:-0.950px;">44,52</span>
<span style="left:2297.70px;top:889px;font-size:23.5px;line-height:23.5px;color:#c6c6c6;letter-spacing:-0.950px;">-24,14</span>
<span style="left:2447.70px;top:889px;font-size:23.5px;line-height:23.5px;color:#c6c6c6;letter-spacing:-0.950px;">-56,08</span>
<span style="left:2598.70px;top:889px;font-size:23.5px;line-height:23.5px;color:#c6c6c6;letter-spacing:-0.950px;">44,63</span>
<span style="left:2748.00px;top:889px;font-size:23.5px;line-height:23.5px;color:#c6c6c6;letter-spacing:-0.950px;">1605,39</span>
<span style="left:2897.70px;top:889px;font-size:23.5px;line-height:23.5px;color:#c6c6c6;letter-spacing:-0.950px;">-407,54</span>
<span style="left:3064.60px;top:889px;font-size:23.5px;line-height:23.5px;color:#c6c6c6;letter-spacing:-0.480px;">Delete</span>
<span style="left:10.80px;top:938px;font-size:23.5px;line-height:23.5px;color:#c6c6c6;letter-spacing:-0.810px;">Portfolio6_1</span>
<span style="left:197.70px;top:938px;font-size:23.5px;line-height:23.5px;color:#c6c6c6;letter-spacing:-0.950px;">6259,82</span>
<span style="left:347.70px;top:938px;font-size:23.5px;line-height:23.5px;color:#c6c6c6;letter-spacing:-0.950px;">2,64</span>
<span style="left:498.00px;top:938px;font-size:23.5px;line-height:23.5px;color:#c6c6c6;letter-spacing:-0.950px;">1,07</span>
<span style="left:648.00px;top:938px;font-size:23.5px;line-height:23.5px;color:#c6c6c6;letter-spacing:-0.950px;">1,86</span>
<span style="left:797.70px;top:938px;font-size:23.5px;line-height:23.5px;color:#c6c6c6;letter-spacing:-0.950px;">-9414,47</span>
<span style="left:947.70px;top:938px;font-size:23.5px;line-height:23.5px;color:#c6c6c6;letter-spacing:-0.950px;">6592</span>
<span style="left:1098.70px;top:938px;font-size:23.5px;line-height:23.5px;color:#c6c6c6;letter-spacing:-0.950px;">4275</span>
<span style="left:1247.70px;top:938px;font-size:23.5px;line-height:23.5px;color:#c6c6c6;letter-spacing:-0.950px;">2298</span>
<span style="left:1397.70px;top:938px;font-size:23.5px;line-height:23.5px;color:#c6c6c6;letter-spacing:-0.950px;">0,95</span>
<span style="left:1547.70px;top:938px;font-size:23.5px;line-height:23.5px;color:#c6c6c6;letter-spacing:-0.950px;">22,33</span>
<span style="left:1697.70px;top:938px;font-size:23.5px;line-height:23.5px;color:#c6c6c6;letter-spacing:-0.950px;">-38,81</span>
<span style="left:1848.00px;top:938px;font-size:23.5px;line-height:23.5px;color:#c6c6c6;letter-spacing:-0.950px;">1889,35</span>
<span style="left:1997.70px;top:938px;font-size:23.5px;line-height:23.5px;color:#c6c6c6;letter-spacing:-0.950px;">-1053,55</span>
<span style="left:2147.70px;top:938px;font-size:23.5px;line-height:23.5px;color:#c6c6c6;letter-spacing:-0.950px;">0,01</span>
<span style="left:2297.70px;top:938px;font-size:23.5px;line-height:23.5px;color:#c6c6c6;letter-spacing:-0.950px;">-0,01</span>
<span style="left:2448.00px;top:938px;font-size:23.5px;line-height:23.5px;color:#c6c6c6;letter-spacing:-0.950px;">12,95</span>
<span style="left:2597.70px;top:938px;font-size:23.5px;line-height:23.5px;color:#c6c6c6;letter-spacing:-0.950px;">51,13</span>
<span style="left:2747.70px;top:938px;font-size:23.5px;line-height:23.5px;color:#c6c6c6;letter-spacing:-0.950px;">6763,68</span>
<span style="left:2897.70px;top:938px;font-size:23.5px;line-height:23.5px;color:#c6c6c6;letter-spacing:-0.950px;">-6450,52</span>
<span style="left:3064.60px;top:938px;font-size:23.5px;line-height:23.5px;color:#c6c6c6;letter-spacing:-0.480px;">Delete</span>
<span style="left:10.80px;top:987px;font-size:23.5px;line-height:23.5px;color:#c6c6c6;letter-spacing:-0.810px;">Portfolio6_2</span>
<span style="left:197.70px;top:987px;font-size:23.5px;line-height:23.5px;color:#c6c6c6;letter-spacing:-0.950px;">8363,66</span>
<span style="left:347.70px;top:987px;font-size:23.5px;line-height:23.5px;color:#c6c6c6;letter-spacing:-0.950px;">23,39</span>
<span style="left:498.00px;top:987px;font-size:23.5px;line-height:23.5px;color:#c6c6c6;letter-spacing:-0.950px;">1,46</span>
<span style="left:648.00px;top:987px;font-size:23.5px;line-height:23.5px;color:#c6c6c6;letter-spacing:-0.950px;">1,79</span>
<span style="left:797.70px;top:987px;font-size:23.5px;line-height:23.5px;color:#c6c6c6;letter-spacing:-0.950px;">-909,02</span>
<span style="left:948.00px;top:987px;font-size:23.5px;line-height:23.5px;color:#c6c6c6;letter-spacing:-0.950px;">1018</span>
<span style="left:1097.70px;top:987px;font-size:23.5px;line-height:23.5px;color:#c6c6c6;letter-spacing:-0.950px;">653</span>
<span style="left:1247.70px;top:987px;font-size:23.5px;line-height:23.5px;color:#c6c6c6;letter-spacing:-0.950px;">365</span>
<span style="left:1397.70px;top:987px;font-size:23.5px;line-height:23.5px;color:#c6c6c6;letter-spacing:-0.950px;">8,22</span>
<span style="left:1548.70px;top:987px;font-size:23.5px;line-height:23.5px;color:#c6c6c6;letter-spacing:-0.950px;">40,40</span>
<span style="left:1697.70px;top:987px;font-size:23.5px;line-height:23.5px;color:#c6c6c6;letter-spacing:-0.950px;">-49,37</span>
<span style="left:1848.00px;top:987px;font-size:23.5px;line-height:23.5px;color:#c6c6c6;letter-spacing:-0.950px;">173,00</span>
<span style="left:1997.70px;top:987px;font-size:23.5px;line-height:23.5px;color:#c6c6c6;letter-spacing:-0.950px;">-189,40</span>
<span style="left:2147.70px;top:987px;font-size:23.5px;line-height:23.5px;color:#c6c6c6;letter-spacing:-0.950px;">0,20</span>
<span style="left:2297.70px;top:987px;font-size:23.5px;line-height:23.5px;color:#c6c6c6;letter-spacing:-0.950px;">-0,30</span>
<span style="left:2447.70px;top:987px;font-size:23.5px;line-height:23.5px;color:#c6c6c6;letter-spacing:-0.950px;">-37,79</span>
<span style="left:2597.70px;top:987px;font-size:23.5px;line-height:23.5px;color:#c6c6c6;letter-spacing:-0.950px;">51,54</span>
<span style="left:2747.70px;top:987px;font-size:23.5px;line-height:23.5px;color:#c6c6c6;letter-spacing:-0.950px;">957,58</span>
<span style="left:2897.70px;top:987px;font-size:23.5px;line-height:23.5px;color:#c6c6c6;letter-spacing:-0.950px;">-420,32</span>
<span style="left:3064.60px;top:987px;font-size:23.5px;line-height:23.5px;color:#c6c6c6;letter-spacing:-0.480px;">Delete</span>
<span style="left:10.80px;top:1035px;font-size:23.5px;line-height:23.5px;color:#c6c6c6;letter-spacing:-0.810px;">Portfolio7_1</span>
<span style="left:197.70px;top:1035px;font-size:23.5px;line-height:23.5px;color:#c6c6c6;letter-spacing:-0.950px;">8475,12</span>
<span style="left:347.70px;top:1035px;font-size:23.5px;line-height:23.5px;color:#c6c6c6;letter-spacing:-0.950px;">3,97</span>
<span style="left:498.00px;top:1035px;font-size:23.5px;line-height:23.5px;color:#c6c6c6;letter-spacing:-0.950px;">1,09</span>
<span style="left:648.00px;top:1035px;font-size:23.5px;line-height:23.5px;color:#c6c6c6;letter-spacing:-0.950px;">1,84</span>
<span style="left:797.70px;top:1035px;font-size:23.5px;line-height:23.5px;color:#c6c6c6;letter-spacing:-0.950px;">-9414,47</span>
<span style="left:947.70px;top:1035px;font-size:23.5px;line-height:23.5px;color:#c6c6c6;letter-spacing:-0.950px;">7057</span>
<span style="left:1098.70px;top:1035px;font-size:23.5px;line-height:23.5px;color:#c6c6c6;letter-spacing:-0.950px;">4559</span>
<span style="left:1247.70px;top:1035px;font-size:23.5px;line-height:23.5px;color:#c6c6c6;letter-spacing:-0.950px;">2479</span>
<span style="left:1398.00px;top:1035px;font-size:23.5px;line-height:23.5px;color:#c6c6c6;letter-spacing:-0.950px;">1,20</span>
<span style="left:1547.70px;top:1035px;font-size:23.5px;line-height:23.5px;color:#c6c6c6;letter-spacing:-0.950px;">23,11</span>
<span style="left:1697.70px;top:1035px;font-size:23.5px;line-height:23.5px;color:#c6c6c6;letter-spacing:-0.950px;">-39,09</span>
<span style="left:1848.00px;top:1035px;font-size:23.5px;line-height:23.5px;color:#c6c6c6;letter-spacing:-0.950px;">1889,35</span>
<span style="left:1997.70px;top:1035px;font-size:23.5px;line-height:23.5px;color:#c6c6c6;letter-spacing:-0.950px;">-1053,55</span>
<span style="left:2147.70px;top:1035px;font-size:23.5px;line-height:23.5px;color:#c6c6c6;letter-spacing:-0.950px;">0,01</span>
<span style="left:2297.70px;top:1035px;font-size:23.5px;line-height:23.5px;color:#c6c6c6;letter-spacing:-0.950px;">-0,01</span>
<span style="left:2447.70px;top:1035px;font-size:23.5px;line-height:23.5px;color:#c6c6c6;letter-spacing:-0.950px;">9,52</span>
<span style="left:2597.70px;top:1035px;font-size:23.5px;line-height:23.5px;color:#c6c6c6;letter-spacing:-0.950px;">56,92</span>
<span style="left:2747.70px;top:1035px;font-size:23.5px;line-height:23.5px;color:#c6c6c6;letter-spacing:-0.950px;">6763,68</span>
<span style="left:2897.70px;top:1035px;font-size:23.5px;line-height:23.5px;color:#c6c6c6;letter-spacing:-0.950px;">-6450,52</span>
<span style="left:3064.60px;top:1036px;font-size:23.5px;line-height:23.5px;color:#c6c6c6;letter-spacing:-0.480px;">Delete</span>
<span style="left:10.80px;top:1084px;font-size:23.5px;line-height:23.5px;color:#c6c6c6;letter-spacing:-0.810px;">Portfolio20_1</span>
<span style="left:197.70px;top:1084px;font-size:23.5px;line-height:23.5px;color:#c6c6c6;letter-spacing:-0.950px;">5725,83</span>
<span style="left:348.00px;top:1084px;font-size:23.5px;line-height:23.5px;color:#c6c6c6;letter-spacing:-0.950px;">17,25</span>
<span style="left:498.00px;top:1084px;font-size:23.5px;line-height:23.5px;color:#c6c6c6;letter-spacing:-0.950px;">1,49</span>
<span style="left:648.00px;top:1084px;font-size:23.5px;line-height:23.5px;color:#c6c6c6;letter-spacing:-0.950px;">1,79</span>
<span style="left:797.70px;top:1084px;font-size:23.5px;line-height:23.5px;color:#c6c6c6;letter-spacing:-0.950px;">-688,86</span>
<span style="left:947.70px;top:1084px;font-size:23.5px;line-height:23.5px;color:#c6c6c6;letter-spacing:-0.950px;">702</span>
<span style="left:1098.70px;top:1084px;font-size:23.5px;line-height:23.5px;color:#c6c6c6;letter-spacing:-0.950px;">450</span>
<span style="left:1247.70px;top:1084px;font-size:23.5px;line-height:23.5px;color:#c6c6c6;letter-spacing:-0.950px;">252</span>
<span style="left:1397.70px;top:1084px;font-size:23.5px;line-height:23.5px;color:#c6c6c6;letter-spacing:-0.950px;">8,16</span>
<span style="left:1547.70px;top:1084px;font-size:23.5px;line-height:23.5px;color:#c6c6c6;letter-spacing:-0.950px;">38,50</span>
<span style="left:1697.70px;top:1084px;font-size:23.5px;line-height:23.5px;color:#c6c6c6;letter-spacing:-0.950px;">-46,02</span>
<span style="left:1848.00px;top:1084px;font-size:23.5px;line-height:23.5px;color:#c6c6c6;letter-spacing:-0.950px;">173,00</span>
<span style="left:1997.70px;top:1084px;font-size:23.5px;line-height:23.5px;color:#c6c6c6;letter-spacing:-0.950px;">-189,40</span>
<span style="left:2147.70px;top:1084px;font-size:23.5px;line-height:23.5px;color:#c6c6c6;letter-spacing:-0.950px;">0,20</span>
<span style="left:2297.70px;top:1084px;font-size:23.5px;line-height:23.5px;color:#c6c6c6;letter-spacing:-0.950px;">-0,30</span>
<span style="left:2447.70px;top:1084px;font-size:23.5px;line-height:23.5px;color:#c6c6c6;letter-spacing:-0.950px;">-30,82</span>
<span style="left:2597.70px;top:1084px;font-size:23.5px;line-height:23.5px;color:#c6c6c6;letter-spacing:-0.950px;">59,03</span>
<span style="left:2747.70px;top:1084px;font-size:23.5px;line-height:23.5px;color:#c6c6c6;letter-spacing:-0.950px;">868,39</span>
<span style="left:2897.70px;top:1084px;font-size:23.5px;line-height:23.5px;color:#c6c6c6;letter-spacing:-0.950px;">-370,90</span>
<span style="left:3064.60px;top:1084px;font-size:23.5px;line-height:23.5px;color:#c6c6c6;letter-spacing:-0.480px;">Delete</span>
<span style="left:10.80px;top:1133px;font-size:23.5px;line-height:23.5px;color:#c6c6c6;letter-spacing:-0.810px;">Portfolio22_1</span>
<span style="left:197.70px;top:1133px;font-size:23.5px;line-height:23.5px;color:#c6c6c6;letter-spacing:-0.950px;">3621,99</span>
<span style="left:348.00px;top:1133px;font-size:23.5px;line-height:23.5px;color:#c6c6c6;letter-spacing:-0.950px;">1,32</span>
<span style="left:498.00px;top:1133px;font-size:23.5px;line-height:23.5px;color:#c6c6c6;letter-spacing:-0.950px;">1,04</span>
<span style="left:648.00px;top:1133px;font-size:23.5px;line-height:23.5px;color:#c6c6c6;letter-spacing:-0.950px;">1,86</span>
<span style="left:797.70px;top:1133px;font-size:23.5px;line-height:23.5px;color:#c6c6c6;letter-spacing:-0.950px;">-9414,47</span>
<span style="left:947.70px;top:1133px;font-size:23.5px;line-height:23.5px;color:#c6c6c6;letter-spacing:-0.950px;">6276</span>
<span style="left:1098.70px;top:1133px;font-size:23.5px;line-height:23.5px;color:#c6c6c6;letter-spacing:-0.950px;">4072</span>
<span style="left:1247.70px;top:1133px;font-size:23.5px;line-height:23.5px;color:#c6c6c6;letter-spacing:-0.950px;">2185</span>
<span style="left:1397.70px;top:1133px;font-size:23.5px;line-height:23.5px;color:#c6c6c6;letter-spacing:-0.950px;">0,58</span>
<span style="left:1547.70px;top:1133px;font-size:23.5px;line-height:23.5px;color:#c6c6c6;letter-spacing:-0.950px;">21,22</span>
<span style="left:1697.70px;top:1133px;font-size:23.5px;line-height:23.5px;color:#c6c6c6;letter-spacing:-0.950px;">-37,88</span>
<span style="left:1848.00px;top:1133px;font-size:23.5px;line-height:23.5px;color:#c6c6c6;letter-spacing:-0.950px;">1889,35</span>
<span style="left:1997.70px;top:1133px;font-size:23.5px;line-height:23.5px;color:#c6c6c6;letter-spacing:-0.950px;">-1053,55</span>
<span style="left:2147.70px;top:1133px;font-size:23.5px;line-height:23.5px;color:#c6c6c6;letter-spacing:-0.950px;">0,01</span>
<span style="left:2297.70px;top:1133px;font-size:23.5px;line-height:23.5px;color:#c6c6c6;letter-spacing:-0.950px;">-0,01</span>
<span style="left:2448.00px;top:1133px;font-size:23.5px;line-height:23.5px;color:#c6c6c6;letter-spacing:-0.950px;">16,55</span>
<span style="left:2597.70px;top:1133px;font-size:23.5px;line-height:23.5px;color:#c6c6c6;letter-spacing:-0.950px;">57,18</span>
<span style="left:2747.70px;top:1133px;font-size:23.5px;line-height:23.5px;color:#c6c6c6;letter-spacing:-0.950px;">6763,68</span>
<span style="left:2897.70px;top:1133px;font-size:23.5px;line-height:23.5px;color:#c6c6c6;letter-spacing:-0.950px;">-6450,52</span>
<span style="left:3064.60px;top:1133px;font-size:23.5px;line-height:23.5px;color:#c6c6c6;letter-spacing:-0.480px;">Delete</span>
</div></body></html>
